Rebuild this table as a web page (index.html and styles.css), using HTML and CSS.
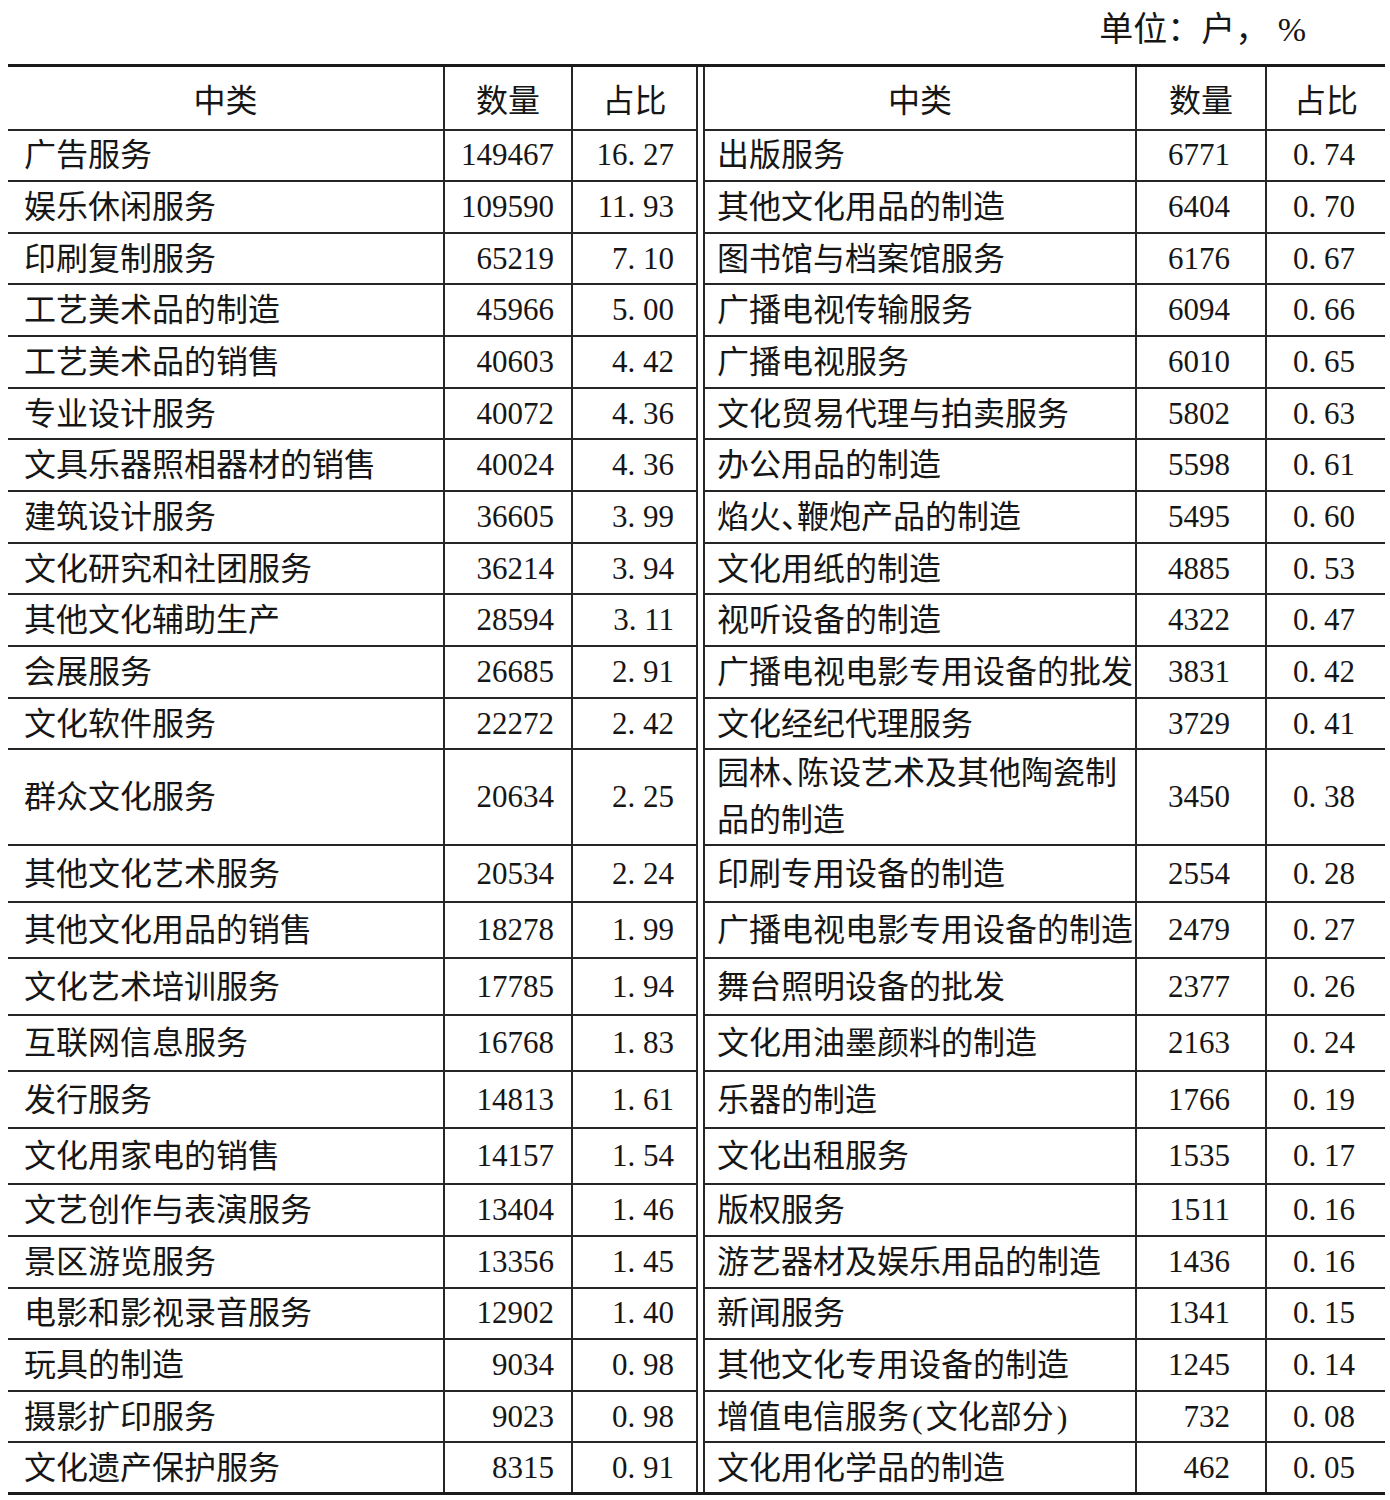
FILE: index.html
```html
<!DOCTYPE html>
<html lang="zh-CN">
<head>
<meta charset="utf-8">
<title>文化产业中类分布</title>
<link rel="stylesheet" href="styles.css">
</head>
<body>
<div class="unit">单位：户， %</div>
<table class="data">
<colgroup>
<col class="c-name1"><col class="c-num1"><col class="c-pct1"><col class="c-gap"><col class="c-name2"><col class="c-num2"><col class="c-pct2">
</colgroup>
<tbody>
<tr class="head">
<th>中类</th><th>数量</th><th>占比</th>
<td class="gap" rowspan="26"></td>
<th>中类</th><th>数量</th><th>占比</th>
</tr>
<tr><td class="name">广告服务</td><td class="num">149467</td><td class="pct">16. 27</td><td class="name r">出版服务</td><td class="num r">6771</td><td class="pct r">0. 74</td></tr>
<tr><td class="name">娱乐休闲服务</td><td class="num">109590</td><td class="pct">11. 93</td><td class="name r">其他文化用品的制造</td><td class="num r">6404</td><td class="pct r">0. 70</td></tr>
<tr><td class="name">印刷复制服务</td><td class="num">65219</td><td class="pct">7. 10</td><td class="name r">图书馆与档案馆服务</td><td class="num r">6176</td><td class="pct r">0. 67</td></tr>
<tr><td class="name">工艺美术品的制造</td><td class="num">45966</td><td class="pct">5. 00</td><td class="name r">广播电视传输服务</td><td class="num r">6094</td><td class="pct r">0. 66</td></tr>
<tr><td class="name">工艺美术品的销售</td><td class="num">40603</td><td class="pct">4. 42</td><td class="name r">广播电视服务</td><td class="num r">6010</td><td class="pct r">0. 65</td></tr>
<tr><td class="name">专业设计服务</td><td class="num">40072</td><td class="pct">4. 36</td><td class="name r">文化贸易代理与拍卖服务</td><td class="num r">5802</td><td class="pct r">0. 63</td></tr>
<tr><td class="name">文具乐器照相器材的销售</td><td class="num">40024</td><td class="pct">4. 36</td><td class="name r">办公用品的制造</td><td class="num r">5598</td><td class="pct r">0. 61</td></tr>
<tr><td class="name">建筑设计服务</td><td class="num">36605</td><td class="pct">3. 99</td><td class="name r">焰火<span class="half">、</span>鞭炮产品的制造</td><td class="num r">5495</td><td class="pct r">0. 60</td></tr>
<tr><td class="name">文化研究和社团服务</td><td class="num">36214</td><td class="pct">3. 94</td><td class="name r">文化用纸的制造</td><td class="num r">4885</td><td class="pct r">0. 53</td></tr>
<tr><td class="name">其他文化辅助生产</td><td class="num">28594</td><td class="pct">3. 11</td><td class="name r">视听设备的制造</td><td class="num r">4322</td><td class="pct r">0. 47</td></tr>
<tr><td class="name">会展服务</td><td class="num">26685</td><td class="pct">2. 91</td><td class="name r">广播电视电影专用设备的批发</td><td class="num r">3831</td><td class="pct r">0. 42</td></tr>
<tr><td class="name">文化软件服务</td><td class="num">22272</td><td class="pct">2. 42</td><td class="name r">文化经纪代理服务</td><td class="num r">3729</td><td class="pct r">0. 41</td></tr>
<tr class="tall"><td class="name">群众文化服务</td><td class="num">20634</td><td class="pct">2. 25</td><td class="name r wrap">园林<span class="half">、</span>陈设艺术及其他陶瓷制品的制造</td><td class="num r">3450</td><td class="pct r">0. 38</td></tr>
<tr class="wide"><td class="name">其他文化艺术服务</td><td class="num">20534</td><td class="pct">2. 24</td><td class="name r">印刷专用设备的制造</td><td class="num r">2554</td><td class="pct r">0. 28</td></tr>
<tr class="wide"><td class="name">其他文化用品的销售</td><td class="num">18278</td><td class="pct">1. 99</td><td class="name r">广播电视电影专用设备的制造</td><td class="num r">2479</td><td class="pct r">0. 27</td></tr>
<tr class="wide"><td class="name">文化艺术培训服务</td><td class="num">17785</td><td class="pct">1. 94</td><td class="name r">舞台照明设备的批发</td><td class="num r">2377</td><td class="pct r">0. 26</td></tr>
<tr class="wide"><td class="name">互联网信息服务</td><td class="num">16768</td><td class="pct">1. 83</td><td class="name r">文化用油墨颜料的制造</td><td class="num r">2163</td><td class="pct r">0. 24</td></tr>
<tr class="wide"><td class="name">发行服务</td><td class="num">14813</td><td class="pct">1. 61</td><td class="name r">乐器的制造</td><td class="num r">1766</td><td class="pct r">0. 19</td></tr>
<tr class="wide"><td class="name">文化用家电的销售</td><td class="num">14157</td><td class="pct">1. 54</td><td class="name r">文化出租服务</td><td class="num r">1535</td><td class="pct r">0. 17</td></tr>
<tr class="low"><td class="name">文艺创作与表演服务</td><td class="num">13404</td><td class="pct">1. 46</td><td class="name r">版权服务</td><td class="num r">1511</td><td class="pct r">0. 16</td></tr>
<tr class="low"><td class="name">景区游览服务</td><td class="num">13356</td><td class="pct">1. 45</td><td class="name r">游艺器材及娱乐用品的制造</td><td class="num r">1436</td><td class="pct r">0. 16</td></tr>
<tr class="low"><td class="name">电影和影视录音服务</td><td class="num">12902</td><td class="pct">1. 40</td><td class="name r">新闻服务</td><td class="num r">1341</td><td class="pct r">0. 15</td></tr>
<tr class="low"><td class="name">玩具的制造</td><td class="num">9034</td><td class="pct">0. 98</td><td class="name r">其他文化专用设备的制造</td><td class="num r">1245</td><td class="pct r">0. 14</td></tr>
<tr class="low"><td class="name">摄影扩印服务</td><td class="num">9023</td><td class="pct">0. 98</td><td class="name r">增值电信服务<span class="paren">(</span>文化部分<span class="paren">)</span></td><td class="num r">732</td><td class="pct r">0. 08</td></tr>
<tr class="low last"><td class="name">文化遗产保护服务</td><td class="num">8315</td><td class="pct">0. 91</td><td class="name r">文化用化学品的制造</td><td class="num r">462</td><td class="pct r">0. 05</td></tr>
</tbody>
</table>
</body>
</html>
```

FILE: styles.css
```css
html, body {
  margin: 0;
  padding: 0;
  background: #ffffff;
}

body {
  font-family: "Liberation Serif", "Noto Sans CJK SC", serif;
  color: #161616;
}

.unit {
  height: 64px;
  line-height: 60px;
  font-size: 34px;
  text-align: right;
  padding-right: 84px;
  box-sizing: border-box;
  white-space: nowrap;
}

.data {
  margin-left: 8px;
  width: 1377px;
  table-layout: fixed;
  border-collapse: collapse;
  border-spacing: 0;
}

.c-name1 { width: 436px; }
.c-num1 { width: 128px; }
.c-pct1 { width: 125px; }
.c-gap { width: 7px; }
.c-name2 { width: 432px; }
.c-num2 { width: 130px; }
.c-pct2 { width: 119px; }

.data th,
.data td {
  padding: 0;
  border-bottom: 2px solid #262626;
  border-left: 2px solid #262626;
  vertical-align: middle;
  white-space: nowrap;
}

.data th:first-child,
.data td:first-child {
  border-left: none;
}

.data th {
  font-weight: normal;
  font-size: 32px;
  text-align: center;
  border-top: 3px solid #1a1a1a;
  border-bottom: 2px solid #262626;
}

.data td.gap {
  border-top: 3px solid #1a1a1a;
  border-bottom: 3px solid #1a1a1a;
  border-left: 2px solid #262626;
  border-right: 2px solid #262626;
}

.data tr { height: 51.67px; }
.data tr.head { height: 64px; }
.data tr.tall { height: 96px; }
.data tr.wide { height: 56.5px; }
.data tr.low { height: 51.6px; }

.data tr.last td {
  border-bottom: 3px solid #1a1a1a;
}

.name {
  font-size: 32px;
  line-height: 48px;
  text-align: left;
  padding-left: 16px !important;
}

.name.r {
  padding-left: 12px !important;
  padding-right: 2px !important;
}

.name.wrap {
  white-space: normal !important;
  line-height: 47px;
}

.num,
.pct {
  font-size: 31px;
  text-align: right;
}

.num { padding-right: 17px !important; }
.pct { padding-right: 22px !important; }
.num.r { padding-right: 35px !important; }
.pct.r { padding-right: 30px !important; }

.half {
  font-feature-settings: "halt";
}

.paren {
  font-family: "Liberation Serif", serif;
  padding: 0 3px;
}
```
